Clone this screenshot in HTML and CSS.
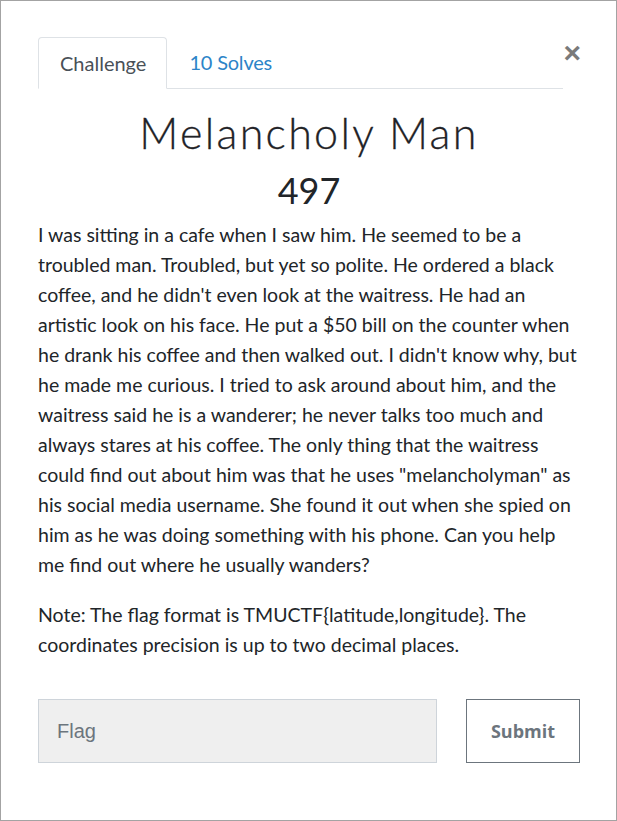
FILE: index.html
```html
<!DOCTYPE html>
<html>
<head>
<meta charset="utf-8">
<link rel="stylesheet" href="styles.css">
</head>
<body>
<div class="modal">
  <div class="header">
    <ul class="tabs">
      <li class="tab active">Challenge</li>
      <li class="tab link">10 Solves</li>
    </ul>
    <span class="close">&times;</span>
  </div>
  <h2 class="title">Melancholy Man</h2>
  <h3 class="value">497</h3>
  <div class="desc">
    <p>I was sitting in a cafe when I saw him. He seemed to be a troubled man. Troubled, but yet so polite. He ordered a black coffee, and he didn't even look at the waitress. He had an artistic look on his face. He put a $50 bill on the counter when he drank his coffee and then walked out. I didn't know why, but he made me curious. I tried to ask around about him, and the waitress said he is a wanderer; he never talks too much and always stares at his coffee. The only thing that the waitress could find out about him was that he uses "melancholyman" as his social media username. She found it out when she spied on him as he was doing something with his phone. Can you help me find out where he usually wanders?</p>
    <p>Note: The flag format is TMUCTF{latitude,longitude}. The coordinates precision is up to two decimal places.</p>
  </div>
  <form class="submit-row">
    <input class="flag" type="text" placeholder="Flag">
    <button class="submit" type="button">Submit</button>
  </form>
</div>
</body>
</html>
```
FILE: styles.css
```css
html, body { margin: 0; padding: 0; background: #fff; }
.modal {
  box-sizing: border-box;
  width: 617px;
  height: 821px;
  border: 1px solid #a3a3a3;
  padding: 36px 36px 0 37px;
  font-family: Lato, "Liberation Sans", sans-serif;
  color: #212529;
}
.header { display: flex; align-items: flex-start; }
.tabs {
  list-style: none;
  margin: 0;
  padding: 0;
  display: flex;
  width: 526px;
  border-bottom: 1px solid #dee2e6;
  height: 51px;
}
.tab {
  box-sizing: border-box;
  font-size: 20px;
  line-height: 51px;
  height: 52px;
  padding: 0 20px 0 21px;
}
.tab.active {
  color: #495057;
  border: 1px solid #dee2e6;
  border-bottom-color: #fff;
  border-radius: 4px 4px 0 0;
  line-height: 51px;
}
.tab.link { color: #2c84c8; padding-left: 22px; letter-spacing: -0.2px; }
.close {
  margin-left: auto;
  margin-top: 1px;
  margin-right: -1px;
  font-family: "Liberation Sans", Arial, sans-serif;
  font-weight: bold;
  font-size: 30px;
  line-height: 30px;
  color: #7a7a7a;
}
.title {
  margin: 18px 0 0;
  text-align: center;
  font-weight: 300;
  font-size: 43px;
  letter-spacing: 2.3px;
  line-height: 52px;
  color: #1f2327;
  -webkit-text-stroke: 0.3px #1f2327;
}
.value {
  margin: 9px 0 0;
  text-align: center;
  font-weight: 400;
  font-size: 36px;
  line-height: 44px;
}
.desc { margin-top: 8px; }
.desc p {
  margin: 0 0 20px;
  font-size: 19.5px;
  line-height: 30px;
}
.submit-row {
  display: flex;
  justify-content: space-between;
  margin-top: 39px;
}
.flag {
  box-sizing: border-box;
  width: 399px;
  height: 64px;
  background: #efefef;
  border: 1px solid #ced4da;
  padding: 0 18px;
  font-family: "Liberation Sans", Arial, sans-serif;
  font-size: 20px;
  color: #495057;
  outline: none;
}
.flag::placeholder { color: #6c757d; }
.submit {
  box-sizing: border-box;
  width: 114px;
  height: 64px;
  background: #fff;
  border: 1px solid #6c757d;
  font-family: "Open Sans", sans-serif;
  font-weight: 700;
  font-size: 18px;
  color: #6c757d;
}
```
